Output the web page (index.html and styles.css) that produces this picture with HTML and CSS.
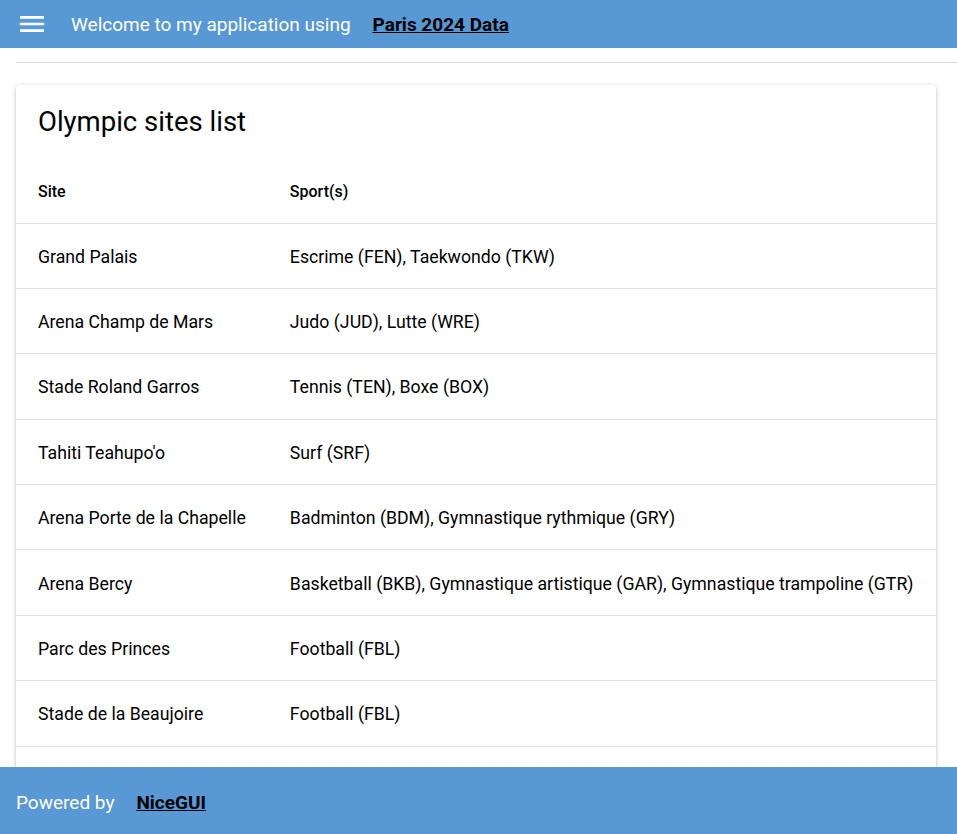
FILE: index.html
```html
<!DOCTYPE html>
<html lang="en">
<head>
<meta charset="utf-8">
<title>Paris 2024 Data</title>
<link rel="stylesheet" href="styles.css">
</head>
<body>
<header class="topbar">
  <button class="menu-btn" aria-label="Menu">
    <svg viewBox="0 0 24 24" width="32" height="32"><path d="M3 18h18v-2H3v2zm0-5h18v-2H3v2zm0-7v2h18V6H3z" fill="#fff"/></svg>
  </button>
  <span class="welcome">Welcome to my application using</span>
  <a class="brand-link" href="#">Paris 2024 Data</a>
</header>
<main class="page">
  <hr class="separator">
  <section class="card">
    <h1 class="card-title">Olympic sites list</h1>
    <table class="sites">
      <thead>
        <tr><th>Site</th><th>Sport(s)</th></tr>
      </thead>
      <tbody>
        <tr><td>Grand Palais</td><td>Escrime (FEN), Taekwondo (TKW)</td></tr>
        <tr><td>Arena Champ de Mars</td><td>Judo (JUD), Lutte (WRE)</td></tr>
        <tr><td>Stade Roland Garros</td><td>Tennis (TEN), Boxe (BOX)</td></tr>
        <tr><td>Tahiti Teahupo'o</td><td>Surf (SRF)</td></tr>
        <tr><td>Arena Porte de la Chapelle</td><td>Badminton (BDM), Gymnastique rythmique (GRY)</td></tr>
        <tr><td>Arena Bercy</td><td>Basketball (BKB), Gymnastique artistique (GAR), Gymnastique trampoline (GTR)</td></tr>
        <tr><td>Parc des Princes</td><td>Football (FBL)</td></tr>
        <tr><td>Stade de la Beaujoire</td><td>Football (FBL)</td></tr>
        <tr><td>Stade Pierre Mauroy</td><td>Handball (HBL), Basketball (BKB)</td></tr>
      </tbody>
    </table>
  </section>
</main>
<footer class="bottombar">
  <span class="powered">Powered by</span>
  <a class="brand-link" href="#">NiceGUI</a>
</footer>
</body>
</html>
```

FILE: styles.css
```css
* { box-sizing: border-box; }
html, body { margin: 0; padding: 0; }
body {
  font-family: Roboto, "Liberation Sans", sans-serif;
  color: #000;
  background: #fff;
  overflow: hidden;
  height: 834px;
}
.topbar {
  position: fixed;
  top: 0; left: 0; right: 0;
  height: 48px;
  background: #5898d4;
  display: flex;
  align-items: center;
  padding-left: 16px;
  z-index: 10;
}
.menu-btn {
  width: 32px; height: 32px;
  padding: 0; border: 0; background: none;
  display: flex;
}
.welcome {
  color: #fff;
  font-size: 19px;
  margin-left: 23px;
}
.brand-link {
  color: #000;
  font-weight: 700;
  font-size: 19px;
  text-decoration: underline;
  margin-left: 22px;
}
.page {
  padding: 48px 0 0 16px;
}
.separator {
  border: 0;
  border-top: 1px solid #dedede;
  margin: 14px 0 0 0;
  height: 0;
}
.card {
  margin-top: 22px;
  width: fit-content;
  background: #fff;
  border-radius: 4px;
  box-shadow: 0 1px 5px rgba(0,0,0,0.2), 0 2px 2px rgba(0,0,0,0.14), 0 3px 1px -2px rgba(0,0,0,0.12);
}
.card-title {
  margin: 0;
  font-size: 27.5px;
  font-weight: 400;
  line-height: 74px;
  padding: 0 22px;
}
.sites {
  border-collapse: collapse;
  font-size: 17.7px;
}
.sites th {
  text-align: left;
  font-size: 16px;
  font-weight: 500;
  height: 64px;
  padding: 1px 22px 0;
  border-bottom: 1px solid #e0e0e0;
}
.sites td {
  height: 65.4px;
  padding: 2px 22px 0;
  border-bottom: 1px solid #e0e0e0;
  white-space: nowrap;
}
.sites th:last-child,
.sites td:last-child {
  padding-right: 23px;
}
.bottombar {
  position: fixed;
  left: 0; right: 0; bottom: 0;
  height: 67px;
  background: #5898d4;
  display: flex;
  align-items: center;
  padding: 4px 0 0 16px;
  z-index: 10;
}
.powered {
  color: #fff;
  font-size: 19px;
}
.bottombar .brand-link { margin-left: 22px; }
```
